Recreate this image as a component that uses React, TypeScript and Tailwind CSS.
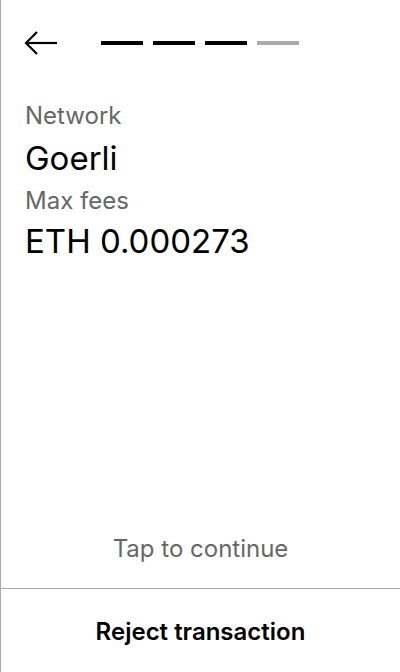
import React from 'react';

const steps = [true, true, true, false];

const BackArrow: React.FC = () => (
	<svg width="34" height="26" viewBox="0 0 34 26" fill="none" stroke="#000" strokeWidth="2.2">
		<path d="M33 13H2" />
		<path d="M13 2L2 13L13 24" />
	</svg>
);

const App: React.FC = () => {
	return (
		<div className="w-[400px] h-[672px] flex flex-col bg-white border-l border-[#a8a8a8] font-['Inter',sans-serif] text-black">
			{/* Header */}
			<div className="h-[86px] flex items-center pl-[23px]">
				<button type="button" className="flex items-center">
					<BackArrow />
				</button>
				<div className="ml-[43px] flex gap-[10px]">
					{steps.map((done, i) => (
						<div
							key={i}
							className={`w-[42px] h-[4px] ${done ? 'bg-black' : 'bg-[#aaaaaa]'}`}
						/>
					))}
				</div>
			</div>

			{/* Details */}
			<div className="px-6 pt-[16px] flex flex-col">
				<div className="text-[24px] leading-[28px] text-[#666666]">Network</div>
				<div className="mt-[9px] text-[33px] leading-[38px]">Goerli</div>
				<div className="mt-[10px] text-[24px] leading-[28px] text-[#666666]">Max fees</div>
				<div className="mt-[7px] text-[33px] leading-[38px]">ETH 0.000273</div>
			</div>

			<div className="flex-grow" />

			<div className="pb-[25px] text-center text-[24px] leading-[28px] text-[#666666]">
				Tap to continue
			</div>

			<div className="h-[84px] pt-[2px] border-t border-[#aaaaaa] flex items-center justify-center">
				<span className="text-[24px] font-semibold">Reject transaction</span>
			</div>
		</div>
	);
};

export default App;
